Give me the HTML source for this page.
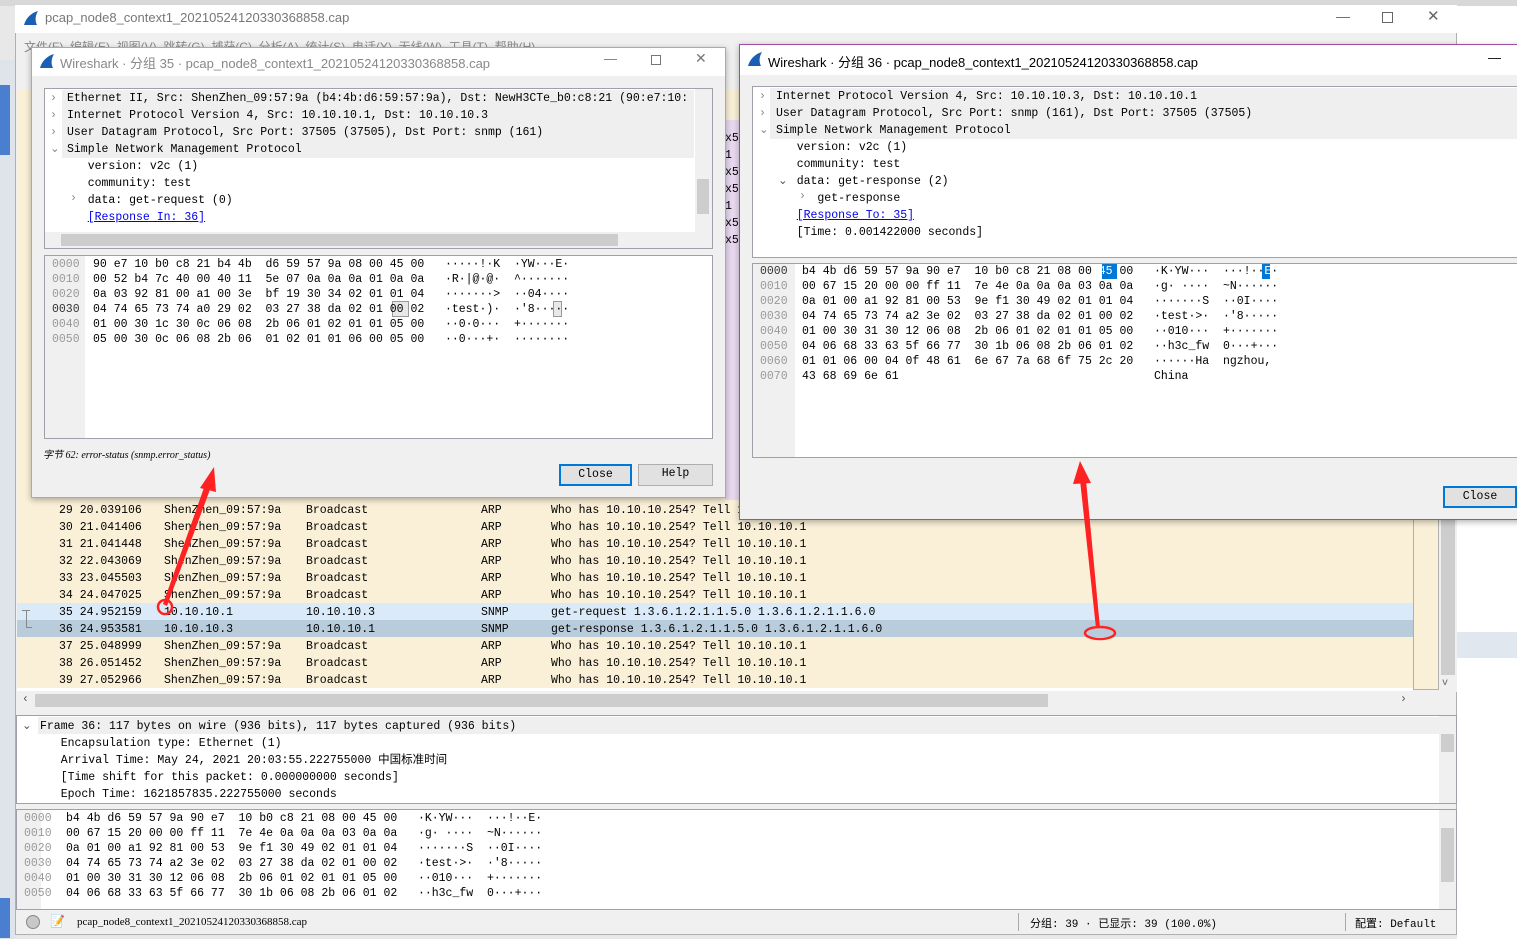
<!DOCTYPE html>
<html><head><meta charset="utf-8"><style>
*{margin:0;padding:0;box-sizing:border-box}
body{width:1517px;height:939px;overflow:hidden;position:relative;background:#e8e8e8;font-family:"Liberation Mono","Noto Sans CJK SC",monospace;font-size:11.5px;color:#000}
.a{position:absolute;white-space:pre}
.ui{font-family:"Liberation Sans","Noto Sans CJK SC",sans-serif}
.pane{position:absolute;background:#fff;border:1px solid #a0a0a8}
.gut{position:absolute;background:#f0f0f0}
.off{color:#999}
.lnk{color:#00e;text-decoration:underline}
.btn{position:absolute;background:#e1e1e1;border:1px solid #adadad;text-align:center;font-size:11.5px;line-height:18px}
.row{position:absolute;left:17px;width:1396px;height:17px;background:#faf0d8}
.sb{position:absolute;background:#f0f0f0}
.th{position:absolute;background:#cdcdcd}
.col{position:absolute;top:502px;line-height:17px;white-space:pre}
</style></head><body>
<div class="a" style="left:0;top:0;width:1517px;height:6px;background:#d8d8d8"></div>
<div class="a" style="left:0;top:60px;width:15px;height:879px;background:#dfe3ea"></div>
<div class="a" style="left:0;top:85px;width:10px;height:70px;background:#4a7fd0"></div>
<div class="a" style="left:0;top:898px;width:10px;height:40px;background:#4a7fd0"></div>
<div class="a" style="left:1457px;top:6px;width:60px;height:933px;background:#fff"></div>
<div class="a" style="left:1457px;top:632px;width:60px;height:26px;background:#e1e7ee"></div>
<div class="a" style="left:15px;top:5px;width:1442px;height:930px;background:#f0f0f0;border:1px solid #b0b0b0"></div>
<div class="a" style="left:15px;top:5px;width:1442px;height:28px;background:#fff"></div>
<svg class="a" style="left:22px;top:10px" width="18" height="16"><path d="M2 15 C4 8 9 3 16 1 C13 6 13 11 15 15Z" fill="#1a5fb4"/></svg>
<div class="a ui" style="left:45px;top:10px;font-size:13px;color:#777">pcap_node8_context1_20210524120330368858.cap</div>
<div class="a ui" style="left:1336px;top:8px;font-size:14px;color:#666">—</div>
<div class="a" style="left:1382px;top:12px;width:11px;height:11px;border:1px solid #666"></div>
<div class="a ui" style="left:1427px;top:7px;font-size:15px;color:#666">✕</div>
<div class="a ui" style="left:24px;top:38px;font-size:12px;color:#888">文件(F)  编辑(E)  视图(V)  跳转(G)  捕获(C)  分析(A)  统计(S)  电话(Y)  无线(W)  工具(T)  帮助(H)</div>
<div class="a" style="left:17px;top:90px;width:1396px;height:600px;background:#faf0d8"></div>
<div class="a" style="left:725px;top:120px;width:14px;height:380px;background:#e8d8f0"></div>
<div class="a" style="left:725px;top:130px;font-size:11.5px;line-height:17px;color:#000">x5
1
x5
x5
1
x5
x5</div>
<div class="row" style="top:501px"></div>
<div class="row" style="top:603px;background:#daeaf8"></div>
<div class="row" style="top:620px;background:#b9ccdb"></div>
<div class="a" style="left:17px;top:688px;width:1396px;height:3px;background:#fff"></div>
<div class="col" style="left:59px">29 20.039106
30 21.041406
31 21.041448
32 22.043069
33 23.045503
34 24.047025
35 24.952159
36 24.953581
37 25.048999
38 26.051452
39 27.052966</div>
<div class="col" style="left:164px">ShenZhen_09:57:9a
ShenZhen_09:57:9a
ShenZhen_09:57:9a
ShenZhen_09:57:9a
ShenZhen_09:57:9a
ShenZhen_09:57:9a
10.10.10.1
10.10.10.3
ShenZhen_09:57:9a
ShenZhen_09:57:9a
ShenZhen_09:57:9a</div>
<div class="col" style="left:306px">Broadcast
Broadcast
Broadcast
Broadcast
Broadcast
Broadcast
10.10.10.3
10.10.10.1
Broadcast
Broadcast
Broadcast</div>
<div class="col" style="left:481px">ARP
ARP
ARP
ARP
ARP
ARP
SNMP
SNMP
ARP
ARP
ARP</div>
<div class="col" style="left:551px">Who has 10.10.10.254? Tell 10.10.10.1
Who has 10.10.10.254? Tell 10.10.10.1
Who has 10.10.10.254? Tell 10.10.10.1
Who has 10.10.10.254? Tell 10.10.10.1
Who has 10.10.10.254? Tell 10.10.10.1
Who has 10.10.10.254? Tell 10.10.10.1
get-request 1.3.6.1.2.1.1.5.0 1.3.6.1.2.1.1.6.0
get-response 1.3.6.1.2.1.1.5.0 1.3.6.1.2.1.1.6.0
Who has 10.10.10.254? Tell 10.10.10.1
Who has 10.10.10.254? Tell 10.10.10.1
Who has 10.10.10.254? Tell 10.10.10.1</div>
<div class="a" style="left:22px;top:610px;width:8px;height:1px;background:#888"></div>
<div class="a" style="left:26px;top:610px;width:1px;height:18px;background:#888"></div>
<div class="a" style="left:26px;top:627px;width:6px;height:1px;background:#888"></div>
<div class="a" style="left:1413px;top:90px;width:26px;height:600px;background:#faf0d8;border:1px solid #b0b0b0"></div>
<div class="sb" style="left:1439px;top:500px;width:18px;height:192px"></div>
<div class="th" style="left:1441px;top:500px;width:14px;height:175px"></div>
<div class="a" style="left:1442px;top:678px;font-size:10px;color:#666">v</div>
<div class="sb" style="left:17px;top:692px;width:1396px;height:17px"></div>
<div class="th" style="left:35px;top:694px;width:1013px;height:13px"></div>
<div class="a" style="left:22px;top:693px;color:#555">‹</div>
<div class="a" style="left:1400px;top:693px;color:#555">›</div>
<div class="pane" style="left:16px;top:715px;width:1441px;height:89px"></div>
<div class="a" style="left:38px;top:717px;width:1401px;height:17px;background:#efefef"></div>
<div class="a" style="left:22px;top:718px;color:#555">⌄</div>
<div class="a" style="left:40px;top:718px;line-height:17px">Frame 36: 117 bytes on wire (936 bits), 117 bytes captured (936 bits)
   Encapsulation type: Ethernet (1)
   Arrival Time: May 24, 2021 20:03:55.222755000 中国标准时间
   [Time shift for this packet: 0.000000000 seconds]
   Epoch Time: 1621857835.222755000 seconds</div>
<div class="sb" style="left:1439px;top:716px;width:17px;height:87px"></div>
<div class="th" style="left:1441px;top:734px;width:13px;height:18px"></div>
<div class="pane" style="left:16px;top:809px;width:1441px;height:101px"></div>
<div class="gut" style="left:17px;top:810px;width:24px;height:99px"></div>
<div class="a off" style="left:24px;top:811px;line-height:15px">0000
0010
0020
0030
0040
0050</div>
<div class="a" style="left:66px;top:811px;line-height:15px">b4 4b d6 59 57 9a 90 e7  10 b0 c8 21 08 00 45 00   ·K·YW···  ···!··E·
00 67 15 20 00 00 ff 11  7e 4e 0a 0a 0a 03 0a 0a   ·g· ····  ~N······
0a 01 00 a1 92 81 00 53  9e f1 30 49 02 01 01 04   ·······S  ··0I····
04 74 65 73 74 a2 3e 02  03 27 38 da 02 01 00 02   ·test·>·  ·'8·····
01 00 30 31 30 12 06 08  2b 06 01 02 01 01 05 00   ··010···  +·······
04 06 68 33 63 5f 66 77  30 1b 06 08 2b 06 01 02   ··h3c_fw  0···+···</div>
<div class="sb" style="left:1439px;top:810px;width:17px;height:99px"></div>
<div class="th" style="left:1441px;top:828px;width:13px;height:54px"></div>
<div class="a" style="left:26px;top:915px;width:14px;height:14px;border-radius:50%;background:#c8c8c8;border:1px solid #888"></div>
<div class="a" style="left:50px;top:914px;font-size:12px">📝</div>
<div class="a" style="left:77px;top:916px;font-family:'Liberation Serif',serif;font-size:11px">pcap_node8_context1_20210524120330368858.cap</div>
<div class="a" style="left:1018px;top:913px;width:1px;height:18px;background:#aaa"></div>
<div class="a" style="left:1030px;top:915px;font-size:11px">分组: 39 · 已显示: 39 (100.0%)</div>
<div class="a" style="left:1345px;top:913px;width:1px;height:18px;background:#aaa"></div>
<div class="a" style="left:1355px;top:915px;font-size:11px">配置: Default</div>

<div class="a" style="left:31px;top:47px;width:695px;height:451px;background:#f0f0f0;border:1px solid #aaa;box-shadow:0 2px 6px rgba(0,0,0,.3)"></div>
<div class="a" style="left:32px;top:48px;width:693px;height:28px;background:#fff"></div>
<svg class="a" style="left:38px;top:53px" width="18" height="16"><path d="M2 15 C4 8 9 3 16 1 C13 6 13 11 15 15Z" fill="#1a5fb4"/></svg>
<div class="a ui" style="left:60px;top:53px;font-size:13px;color:#888">Wireshark · 分组 35 · pcap_node8_context1_20210524120330368858.cap</div>
<div class="a ui" style="left:604px;top:51px;font-size:13px;color:#777">—</div>
<div class="a" style="left:651px;top:55px;width:10px;height:10px;border:1px solid #777"></div>
<div class="a ui" style="left:695px;top:50px;font-size:14px;color:#777">✕</div>
<div class="pane" style="left:44px;top:88px;width:669px;height:161px"></div>
<div class="a" style="left:62px;top:90px;width:632px;height:68px;background:#efefef"></div>
<div class="a" style="left:50px;top:90px;line-height:17px;color:#888">›
›
›
⌄</div>
<div class="a" style="left:67px;top:90px;line-height:17px">Ethernet II, Src: ShenZhen_09:57:9a (b4:4b:d6:59:57:9a), Dst: NewH3CTe_b0:c8:21 (90:e7:10:
Internet Protocol Version 4, Src: 10.10.10.1, Dst: 10.10.10.3
User Datagram Protocol, Src Port: 37505 (37505), Dst Port: snmp (161)
Simple Network Management Protocol
   version: v2c (1)
   community: test
   data: get-request (0)
   <span class="lnk">[Response In: 36]</span></div>
<div class="a" style="left:70px;top:192px;color:#888">›</div>
<div class="sb" style="left:695px;top:89px;width:17px;height:143px"></div>
<div class="th" style="left:697px;top:179px;width:12px;height:35px"></div>
<div class="sb" style="left:45px;top:232px;width:667px;height:16px"></div>
<div class="th" style="left:61px;top:234px;width:557px;height:12px"></div>
<div class="pane" style="left:44px;top:255px;width:669px;height:184px"></div>
<div class="gut" style="left:45px;top:256px;width:40px;height:182px"></div>
<div class="a off" style="left:52px;top:257px;line-height:15px">0000
0010
0020
<span style="color:#333">0030</span>
0040
0050</div>
<div class="a" style="left:392px;top:301px;width:17px;height:16px;border:1px solid #999;background:#e8e8e8"></div>
<div class="a" style="left:553px;top:301px;width:9px;height:16px;border:1px solid #999;background:#e8e8e8"></div>
<div class="a" style="left:93px;top:257px;line-height:15px">90 e7 10 b0 c8 21 b4 4b  d6 59 57 9a 08 00 45 00   ·····!·K  ·YW···E·
00 52 b4 7c 40 00 40 11  5e 07 0a 0a 0a 01 0a 0a   ·R·|@·@·  ^·······
0a 03 92 81 00 a1 00 3e  bf 19 30 34 02 01 01 04   ·······>  ··04····
04 74 65 73 74 a0 29 02  03 27 38 da 02 01 00 02   ·test·)·  ·'8·····
01 00 30 1c 30 0c 06 08  2b 06 01 02 01 01 05 00   ··0·0···  +·······
05 00 30 0c 06 08 2b 06  01 02 01 01 06 00 05 00   ··0···+·  ········</div>
<div class="a" style="left:43px;top:446px;font-family:'Liberation Serif',serif;font-style:italic;font-size:10px">字节 62: error-status (snmp.error_status)</div>
<div class="btn" style="left:559px;top:464px;width:73px;height:22px;border:2px solid #0078d7">Close</div>
<div class="btn" style="left:638px;top:464px;width:75px;height:22px">Help</div>

<div class="a" style="left:739px;top:44px;width:790px;height:476px;background:#f0f0f0;border:1px solid #a04ca0;box-shadow:0 2px 6px rgba(0,0,0,.3)"></div>
<div class="a" style="left:740px;top:45px;width:777px;height:30px;background:#fff"></div>
<svg class="a" style="left:746px;top:51px" width="18" height="16"><path d="M2 15 C4 8 9 3 16 1 C13 6 13 11 15 15Z" fill="#1a5fb4"/></svg>
<div class="a ui" style="left:768px;top:52px;font-size:13px;color:#000">Wireshark · 分组 36 · pcap_node8_context1_20210524120330368858.cap</div>
<div class="a ui" style="left:1488px;top:50px;font-size:13px;color:#000">—</div>
<div class="pane" style="left:752px;top:86px;width:780px;height:172px;border-right:none"></div>
<div class="a" style="left:770px;top:88px;width:747px;height:51px;background:#efefef"></div>
<div class="a" style="left:759px;top:88px;line-height:17px;color:#888">›
›
⌄</div>
<div class="a" style="left:776px;top:88px;line-height:17px">Internet Protocol Version 4, Src: 10.10.10.3, Dst: 10.10.10.1
User Datagram Protocol, Src Port: snmp (161), Dst Port: 37505 (37505)
Simple Network Management Protocol
   version: v2c (1)
   community: test
   data: get-response (2)
      get-response
   <span class="lnk">[Response To: 35]</span>
   [Time: 0.001422000 seconds]</div>
<div class="a" style="left:778px;top:173px;color:#555">⌄</div>
<div class="a" style="left:799px;top:190px;color:#888">›</div>
<div class="pane" style="left:752px;top:263px;width:780px;height:195px;border-right:none"></div>
<div class="gut" style="left:753px;top:264px;width:42px;height:193px"></div>
<div class="a off" style="left:760px;top:264px;line-height:15px"><span style="color:#333">0000</span>
0010
0020
0030
0040
0050
0060
0070</div>
<div class="a" style="left:1102px;top:264px;width:15px;height:15px;background:#0078d7"></div>
<div class="a" style="left:1262px;top:264px;width:8px;height:15px;background:#0078d7"></div>
<div class="a" style="left:802px;top:264px;line-height:15px">b4 4b d6 59 57 9a 90 e7  10 b0 c8 21 08 00 <span style="color:#fff">45</span> 00   ·K·YW···  ···!··<span style="color:#fff">E</span>·
00 67 15 20 00 00 ff 11  7e 4e 0a 0a 0a 03 0a 0a   ·g· ····  ~N······
0a 01 00 a1 92 81 00 53  9e f1 30 49 02 01 01 04   ·······S  ··0I····
04 74 65 73 74 a2 3e 02  03 27 38 da 02 01 00 02   ·test·>·  ·'8·····
01 00 30 31 30 12 06 08  2b 06 01 02 01 01 05 00   ··010···  +·······
04 06 68 33 63 5f 66 77  30 1b 06 08 2b 06 01 02   ··h3c_fw  0···+···
01 01 06 00 04 0f 48 61  6e 67 7a 68 6f 75 2c 20   ······Ha  ngzhou, 
43 68 69 6e 61                                     China</div>
<div class="btn" style="left:1443px;top:486px;width:74px;height:22px;border:2px solid #0078d7">Close</div>

<svg class="a" style="left:0;top:0" width="1517" height="939">
<path d="M163 604 L206 482 L212 484 L167 606Z" fill="#f22"/>
<path d="M200 488 L214 467 L216 492Z" fill="#f22"/>
<circle cx="165" cy="607" r="7" fill="none" stroke="#f22" stroke-width="2.5"/>
<path d="M1096 628 L1080 480 L1086 480 L1100 628Z" fill="#f22"/>
<path d="M1073 484 L1080 461 L1091 483Z" fill="#f22"/>
<ellipse cx="1100" cy="633" rx="15" ry="6" fill="none" stroke="#f22" stroke-width="2.5"/>
</svg>
</body></html>
